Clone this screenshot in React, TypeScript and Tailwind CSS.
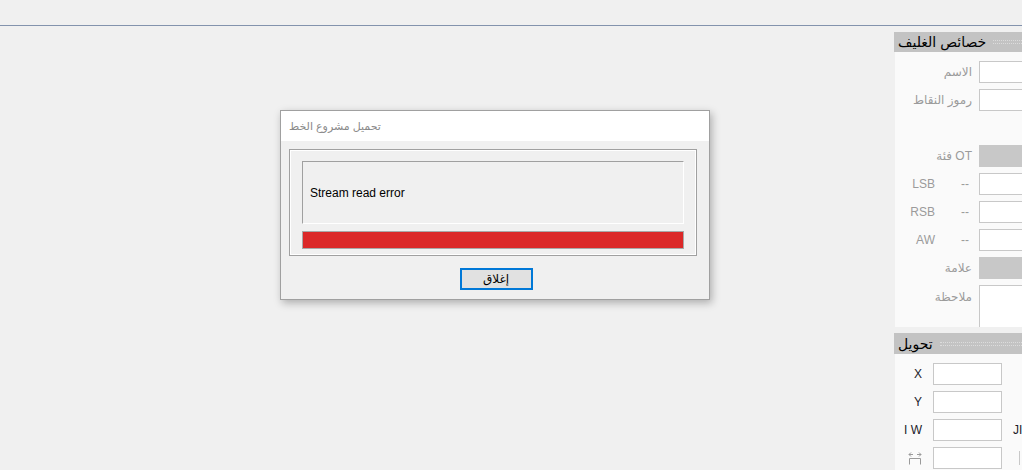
import React from "react";

const font = "font-['Liberation_Sans','DejaVu_Sans',sans-serif]";

const WidthIcon = () => (
  <svg width="14" height="14" viewBox="0 0 14 14" fill="none" stroke="#9a9a9a" strokeWidth="1">
    <path d="M1 3.5h4M9 3.5h4M1 3.5l2-2M1 3.5l2 2M13 3.5l-2-2M13 3.5l-2 2" />
    <path d="M1.5 13.5V7.5h11v6" />
  </svg>
);

const SectionHeader = ({ title, h }: { title: string; h: string }) => (
  <div className={`flex shrink-0 items-center bg-[#c3c3c3] pl-[4px] ${h}`}>
    <span className="text-[14px] leading-none text-black" dir="rtl">
      {title}
    </span>
    <div className="ml-[7px] h-[4px] flex-1 border-y border-dotted border-[#dcdcdc]" />
  </div>
);

const Box = ({ grey, tall }: { grey?: boolean; tall?: boolean }) => (
  <div
    className={`w-[100px] shrink-0 border ${
      grey ? "border-[#c8c8c8] bg-[#c8c8c8]" : "border-[#c8c8c8] bg-white"
    } ${tall ? "h-[46px]" : "h-[22px]"}`}
  />
);

const PropRow = ({
  label,
  dash,
  grey,
  tall,
}: {
  label?: string;
  dash?: boolean;
  grey?: boolean;
  tall?: boolean;
}) => (
  <div className={`flex shrink-0 ${tall ? "items-start" : "items-center"}`}>
    <div className={`flex w-[77px] justify-end text-[12px] text-[#9b9b9b] ${tall ? "pt-[3px]" : ""}`}>
      {dash ? (
        <>
          <span>{label}</span>
          <span className="ml-[26px] mr-[3px]">--</span>
        </>
      ) : (
        <span dir="rtl">{label}</span>
      )}
    </div>
    <div className="ml-[7px]">
      <Box grey={grey} tall={tall} />
    </div>
  </div>
);

const XfRow = ({ label, icon, after }: { label?: string; icon?: boolean; after?: string }) => (
  <div className="flex shrink-0 items-center">
    <div className="flex w-[38px] justify-end pr-[11px] text-[12px] text-[#1a1a2a]">
      {icon ? <WidthIcon /> : label}
    </div>
    <div className="h-[22px] w-[69px] shrink-0 border border-[#c8c8c8] bg-white" />
    {after && <span className="ml-[11px] text-[12px] text-[#1a1a2a]">{after}</span>}
    {icon && <div className="ml-[17px] h-[14px] w-[4px] border-l border-[#c8c8c8]" />}
  </div>
);

export default function App() {
  return (
    <div className={`relative flex h-[470px] w-[1022px] flex-col overflow-hidden bg-[#f0f0f0] ${font}`}>
      <div className="h-[25px] shrink-0" />
      <div className="h-px shrink-0 bg-[#8393ad]" />
      <div className="flex min-h-0 flex-1">
        <div className="flex-1" />
        <div className="w-[128px] overflow-hidden pt-[6px]">
          <div className="w-[200px]">
            <SectionHeader title="خصائص الغليف" h="h-[20px]" />
            <div className="ml-px flex h-[275px] flex-col gap-[6px] overflow-hidden bg-[#fafafa] pt-[9px]">
              <PropRow label="الاسم" />
              <PropRow label="رموز النقاط" />
              <div className="h-[22px] shrink-0" />
              <PropRow label="OT فئة" grey />
              <PropRow label="LSB" dash />
              <PropRow label="RSB" dash />
              <PropRow label="AW" dash />
              <PropRow label="علامة" grey />
              <PropRow label="ملاحظة" tall />
            </div>
            <div className="mt-[6px]">
              <SectionHeader title="تحويل" h="h-[21px]" />
              <div className="ml-px flex flex-col gap-[6px] bg-[#fafafa] pt-[9px] pb-[4px]">
                <XfRow label="X" />
                <XfRow label="Y" />
                <XfRow label="I W" after="JI" />
                <XfRow icon />
              </div>
            </div>
          </div>
        </div>
      </div>

      {/* modal dialog */}
      <div className="absolute left-[280px] top-[110px] flex h-[190px] w-[430px] flex-col border border-[#a0a0a0] bg-[#f0f0f0] shadow-[2px_3px_8px_rgba(0,0,0,0.28)]">
        <div className="flex h-[30px] items-center bg-white pl-[8px] text-[11px] text-[#8a8a8a]">
          <span dir="rtl">تحميل مشروع الخط</span>
        </div>
        <div className="ml-[8px] mr-[12px] mt-[8px] h-[107px] border border-[#a0a0a0]">
          <div className="h-full border border-white px-[11px] pt-[10px]">
            <div className="flex h-[63px] items-center border border-b-white border-l-[#a0a0a0] border-r-white border-t-[#a0a0a0] pl-[7px] text-[12px] text-black">
              Stream read error
            </div>
            <div className="mt-[7px] h-[18px] border border-[#a8a8a8] bg-[#db2828]" />
          </div>
        </div>
        <div className="mt-[12px] flex justify-center pl-[2px]">
          <button className="flex h-[22px] w-[73px] items-center justify-center border-2 border-[#0078d7] bg-[#e1e1e1] text-[12px] text-black" dir="rtl">
            إغلاق
          </button>
        </div>
      </div>
    </div>
  );
}
